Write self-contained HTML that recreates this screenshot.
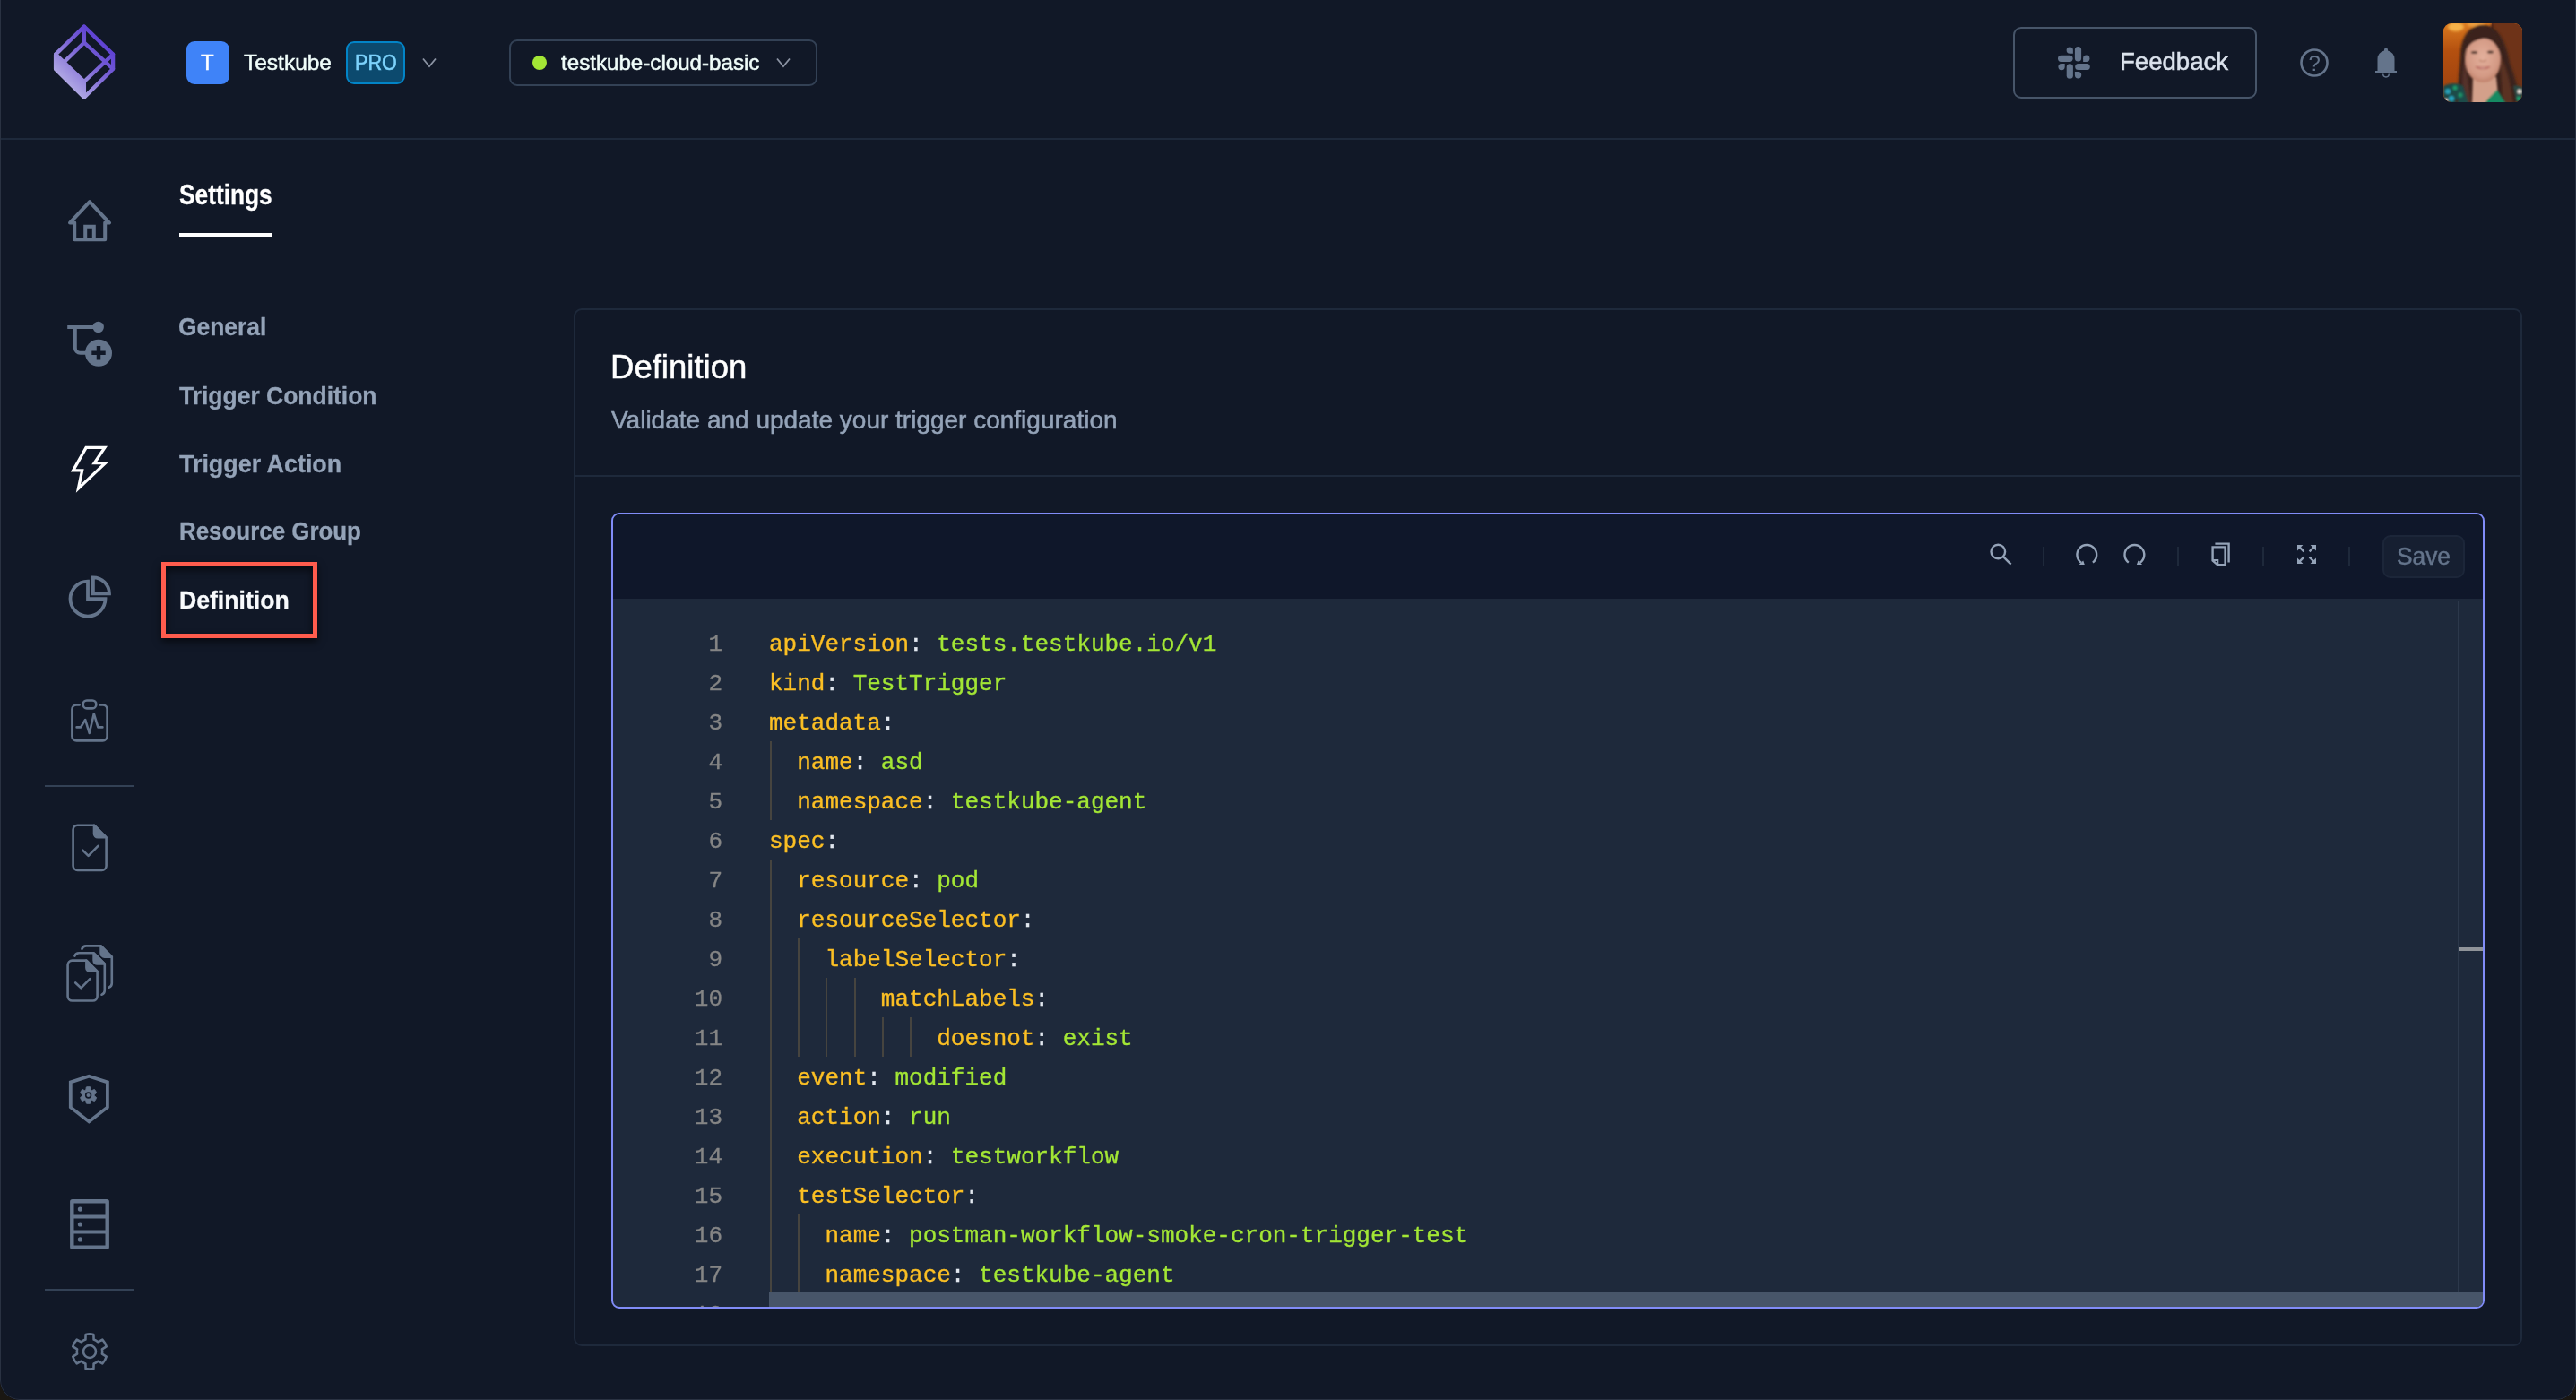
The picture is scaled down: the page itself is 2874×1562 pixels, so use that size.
<!DOCTYPE html>
<html lang="en">
<head>
<meta charset="utf-8">
<title>Testkube - Trigger Definition</title>
<style>
*{box-sizing:border-box;margin:0;padding:0}
html,body{width:2874px;height:1562px;overflow:hidden;background:#1a1712}
body{font-family:"Liberation Sans",sans-serif;color:#fff;position:relative}
#win{will-change:transform;position:absolute;left:0;top:0;width:2874px;height:1562px;background:#111827;border-radius:0 0 22px 22px;overflow:hidden}
#winb{position:absolute;left:0;top:-2px;width:2874px;height:1564px;border-radius:0 0 22px 22px;border:1px solid #2a3242;pointer-events:none}
.abs{position:absolute}
.t{position:absolute;white-space:nowrap;line-height:1;transform-origin:0 50%;-webkit-text-stroke:.5px}
.b{font-weight:bold}
svg{position:absolute;overflow:visible}
/* header */
#hline{left:0;top:154px;width:2874px;height:2px;background:#1e293b}
#orgav{left:208px;top:46px;width:48px;height:48px;border-radius:9px;background:#3f83f8}
#pro{left:386px;top:46px;width:66px;height:48px;border-radius:9px;background:#0c4a6e;border:2px solid #0284c7}
#envsel{left:568px;top:44px;width:344px;height:52px;border-radius:9px;border:2px solid #334155}
#envdot{left:594px;top:62px;width:16px;height:16px;border-radius:50%;background:#a3e635}
#fb{left:2246px;top:30px;width:272px;height:80px;border-radius:9px;border:2px solid #475569}
#avatar{left:2726px;top:26px;width:88px;height:88px;border-radius:9px;overflow:hidden;background:#8a4a1c}
/* sidebar */
.sdiv{left:50px;width:100px;height:2px;background:#334155}
.menu{left:200px;font-size:28px;font-weight:bold;color:#94a3b8;-webkit-text-stroke:.3px}
#redbox{left:180px;top:627px;width:174px;height:85px;border:5px solid #ff5c4d;box-shadow:0 4px 8px rgba(0,0,0,.6), inset 0 4px 8px rgba(0,0,0,.6)}
/* card */
#card{left:640px;top:344px;width:2174px;height:1158px;border:2px solid #1e293b;border-radius:9px}
#cardline{left:642px;top:530px;width:2170px;height:2px;background:#1e293b}
#editor{left:682px;top:572px;width:2090px;height:888px;border:2px solid #818cf8;border-radius:9px;overflow:hidden;background:#1e293b}
#toolbar{left:0;top:0;width:2086px;height:94px;background:#0f172a}
.sep{top:36px;width:2px;height:22px;background:#1e293b}
#save{left:1974px;top:23px;width:92px;height:48px;border-radius:9px;background:#161f31;border:2px solid #1c2639}
#vscroll{left:2058px;top:96px;width:28px;height:790px;border-left:1px solid #2c384b;border-top:1px solid #263144}
#vmark{left:2060px;top:483px;width:26px;height:4px;background:#8f9399}
#hscroll{left:174px;top:868px;width:1912px;height:18px;background:#475569}
.ln{position:absolute;left:0;width:122px;margin-top:2px;-webkit-text-stroke:.3px #858585;text-align:right;font-family:"Liberation Mono",monospace;font-size:26px;line-height:44px;height:44px;color:#858585;white-space:pre}
.cl{position:absolute;left:174px;margin-top:2px;-webkit-text-stroke:.35px;font-family:"Liberation Mono",monospace;font-size:26px;line-height:44px;height:44px;white-space:pre;color:#e2e8f0}
.k{color:#fbbf24}.v{color:#a3e635}
.g{position:absolute;width:2px;background:#46443f}
</style>
</head>
<body>
<div id="win">

<!-- HEADER -->
<div id="hline" class="abs"></div>
<svg id="logo" style="left:0;top:0" width="200" height="140" viewBox="0 0 200 140">
  <defs>
    <linearGradient id="lg" gradientUnits="userSpaceOnUse" x1="126" y1="44" x2="68" y2="104">
      <stop offset="0" stop-color="#5535d2"/><stop offset="0.45" stop-color="#7c66d6"/><stop offset="1" stop-color="#c2bfe8"/>
    </linearGradient>
  </defs>
  <g fill="none" stroke="url(#lg)" stroke-width="4.3" stroke-linejoin="round" stroke-linecap="round">
    <path d="M93.9 29.6 L126.1 60.6 L126.1 76.9 L93.9 108.6 L62.1 76.9 L62.1 60.6 Z"/>
    <path d="M93.9 29.6 L93.9 47.5"/>
    <path d="M93.9 47.5 L71.6 69.1"/>
    <path d="M93.9 47.5 L126.1 76.9"/>
    <path d="M126.1 60.6 L93.9 91"/>
    <path d="M62.1 60.6 L93.9 91 L93.9 108.6 L62.1 76.9 Z" fill="url(#lg)"/>
  </g>
</svg>

<div id="orgav" class="abs"></div>
<div class="t" id="tT" style="left:224px;top:58px;font-size:24px;color:#fff">T</div>
<div class="t" id="tOrg" style="left:271.5px;top:58px;font-size:24px;color:#f0fdfa;transform:scaleX(1.02)">Testkube</div>
<div id="pro" class="abs"></div>
<div class="t" id="tPro" style="left:395.5px;top:58px;font-size:24px;color:#7dd3fc;transform:scaleX(.9)">PRO</div>
<svg style="left:471px;top:64px" width="16" height="12" viewBox="0 0 16 12"><path d="M1 1.5 L8 10 L15 1.5" fill="none" stroke="#8b93a3" stroke-width="1.8"/></svg>

<div id="envsel" class="abs"></div>
<div id="envdot" class="abs"></div>
<div class="t" id="tEnv" style="left:626px;top:58px;font-size:24px;color:#f0fdfa;transform:scaleX(1.006)">testkube-cloud-basic</div>
<svg style="left:866px;top:64px" width="16" height="12" viewBox="0 0 16 12"><path d="M1 1.5 L8 10 L15 1.5" fill="none" stroke="#8b93a3" stroke-width="1.8"/></svg>

<div id="fb" class="abs"></div>
<svg id="slack" style="left:2296px;top:52px" width="36" height="36" viewBox="0 0 36 36" fill="#64748b">
  <g id="sq"><rect x="18.9" y="0" width="7.2" height="16.6" rx="3.6"/><path d="M16.9 7.7 H13.25 a3.65 3.65 0 1 1 3.65 -3.65 Z"/></g>
  <use href="#sq" transform="rotate(90 17.9 17.9)"/><use href="#sq" transform="rotate(180 17.9 17.9)"/><use href="#sq" transform="rotate(270 17.9 17.9)"/>
</svg>
<div class="t" id="tFb" style="left:2364.5px;transform:scaleX(.985);top:55px;font-size:28px;color:#dbe2ec">Feedback</div>
<svg id="help" style="left:2564px;top:52px" width="36" height="36" viewBox="0 0 36 36"><circle cx="18" cy="18" r="14.5" fill="none" stroke="#64748b" stroke-width="2.6"/></svg>
<div class="t" id="tQ" style="left:2575.5px;top:58.5px;font-size:24px;color:#64748b;-webkit-text-stroke:0">?</div>
<svg id="bell" style="left:2648px;top:52px" width="28" height="36" viewBox="0 0 28 36" fill="#64748b">
  <path d="M14 1.5 a2 2 0 0 1 2 2 v1 a9.5 9.5 0 0 1 7.5 9.3 V27 h2.5 v2.6 H2 V27 h2.5 V13.8 A9.5 9.5 0 0 1 12 4.5 v-1 a2 2 0 0 1 2-2z"/>
  <path d="M10.7 30.6 a3.3 3.3 0 0 0 6.6 0" fill="none" stroke="#64748b" stroke-width="1.5"/>
</svg>
<div id="avatar" class="abs"><svg style="left:0;top:0" width="88" height="88" viewBox="0 0 88 88">
  <defs>
    <filter id="bl1" x="-20%" y="-20%" width="140%" height="140%"><feGaussianBlur stdDeviation="1.6"/></filter>
    <filter id="bl2" x="-20%" y="-20%" width="140%" height="140%"><feGaussianBlur stdDeviation="0.8"/></filter>
    <linearGradient id="bgl" x1="0" y1="0" x2="0" y2="1"><stop offset="0" stop-color="#d9791f"/><stop offset="0.35" stop-color="#b4500f"/><stop offset="1" stop-color="#9a3f10"/></linearGradient>
    <radialGradient id="face" cx="0.5" cy="0.45" r="0.6"><stop offset="0" stop-color="#e3b09c"/><stop offset="0.7" stop-color="#d49a85"/><stop offset="1" stop-color="#b87962"/></radialGradient>
  </defs>
  <rect width="88" height="88" fill="url(#bgl)"/>
  <rect x="54" y="0" width="34" height="88" fill="#6e3318"/>
  <g filter="url(#bl1)">
    <ellipse cx="14" cy="4" rx="9" ry="5" fill="#f6b24a"/>
    <ellipse cx="36" cy="1" rx="10" ry="3" fill="#eea040"/>
    <rect x="53" y="0" width="3" height="88" fill="#4e2412"/>
    <path d="M44 2 C28 2 20 16 19 34 C18 52 16 70 15 92 L86 92 C84 74 80 60 74 44 C70 22 62 2 44 2 Z" fill="#3b231b"/>
    <path d="M60 30 C70 44 76 70 78 92 L66 92 C66 70 64 50 60 30Z" fill="#5a3022"/>
    <path d="M24 40 C21 56 20 72 22 92 L32 92 C28 74 27 56 24 40Z" fill="#55302a"/>
  </g>
  <g filter="url(#bl2)">
    <path d="M33 60 L59 60 L62 90 L32 90 Z" fill="#d3a08a"/>
    <path d="M44 15 C31 15 24 27 24 41 C24 55 33 66 44 66 C56 66 64 55 64 40 C64 28 58 15 44 15 Z" fill="url(#face)"/>
    <path d="M44 3 C30 4 23 18 22 38 C25 26 32 19 44 17 C54 16 61 24 65 38 C64 18 58 3 44 3Z" fill="#3b231b"/>
    <ellipse cx="34.5" cy="32.5" rx="3.6" ry="1.5" fill="#4a3028"/>
    <ellipse cx="52.5" cy="32" rx="3.6" ry="1.5" fill="#4a3028"/>
    <path d="M36 48.5 Q44 53.5 52 48.5 Q44 50 36 48.5Z" fill="#f1e4de" stroke="#b8655c" stroke-width="1.2"/>
    <path d="M40 41 Q44 44 48 41" fill="none" stroke="#b98068" stroke-width="1.2"/>
    <path d="M0 70 C8 66 16 66 22 70 L28 90 L0 90Z" fill="#1d4b4a"/>
    <path d="M60 74 L50 84 L46 90 L70 90 Z" fill="#178a62"/>
    <path d="M78 70 C82 69 86 70 90 72 L90 90 L82 90 Z" fill="#2a4a44"/>
    <circle cx="5" cy="76" r="3" fill="#2aa0b8"/><circle cx="13" cy="72" r="2.5" fill="#1f9a6a"/><circle cx="9" cy="84" r="3" fill="#23a4c0"/><circle cx="19" cy="80" r="2.5" fill="#1e8f66"/><circle cx="3" cy="86" r="2" fill="#e8e0d8"/><circle cx="15" cy="87" r="2" fill="#3a2a22"/>
    <circle cx="85" cy="76" r="2.5" fill="#e8e0d8"/><circle cx="84" cy="84" r="2.5" fill="#1f9a6a"/>
  </g>
</svg></div>

<!-- SIDEBAR ICONS -->
<svg id="sideicons" style="left:0;top:0" width="200" height="1562" viewBox="0 0 200 1562" fill="none" stroke="#64748b" stroke-linecap="round" stroke-linejoin="round">
  <!-- home -->
  <g stroke-width="4">
    <path d="M83.2 267.2 V248.6 H78 L100 225.2 L122 248.6 H117.2 V267.2 Z" stroke-linejoin="round"/>
    <path d="M95.2 267 V252.8 H104.8 V267" stroke-linecap="butt" stroke-linejoin="miter"/>
  </g>
  <!-- add trigger -->
  <g stroke-width="4" stroke-linecap="butt">
    <path d="M75.2 365 H109"/>
    <path d="M83.8 365 V388 a5.8 5.8 0 0 0 5.8 5.8 H98"/>
  </g>
  <circle cx="109.7" cy="365" r="6.2" fill="#64748b" stroke="none"/>
  <circle cx="110" cy="393.8" r="15" fill="#64748b" stroke="none"/>
  <path d="M102.3 393.8 H117.7 M110 386.1 V401.5" stroke="#111827" stroke-width="4.5" stroke-linecap="butt"/>
  <!-- lightning (active) -->
  <clipPath id="lc"><path d="M95.1 497.8 L120 497.8 L108.4 514.9 L121.7 514.9 L84.8 549.8 L89.6 526.6 L78.8 526.6 Z"/></clipPath>
  <path d="M95.1 497.8 L120 497.8 L108.4 514.9 L121.7 514.9 L84.8 549.8 L89.6 526.6 L78.8 526.6 Z" stroke="#fff" stroke-width="6.6" stroke-linejoin="miter" stroke-miterlimit="10" clip-path="url(#lc)"/>
  <!-- pie -->
  <g stroke-width="3.8" stroke-linecap="butt" stroke-linejoin="miter">
    <path d="M98 648.6 A19.5 19.5 0 1 0 117.5 668.1 H98 Z"/>
    <path d="M103.9 662.4 V644.3 A18.1 18.1 0 0 1 122 662.4 Z"/>
  </g>
  <!-- clipboard pulse -->
  <g stroke-width="2.6">
    <path d="M88.6 786.5 H85.4 a5 5 0 0 0 -5 5 V821.4 a5 5 0 0 0 5 5 H114.6 a5 5 0 0 0 5 -5 V791.5 a5 5 0 0 0 -5 -5 H111.4"/>
    <rect x="92.7" y="781.5" width="14.6" height="8.9" rx="4.2"/>
    <path d="M85.6 811.4 H90.1 L95.2 803 L99.7 818 L104.8 796.4 L109.4 811.4 H114.4"/>
  </g>
  <!-- file check -->
  <g stroke-width="2.6">
    <path d="M105 920.7 H86.6 a5 5 0 0 0 -5 5 V965.9 a5 5 0 0 0 5 5 H113.6 a5 5 0 0 0 5 -5 V934.3 Z"/>
    <path d="M105 920.7 L118.6 934.3 H109 a4 4 0 0 1 -4 -4 Z" fill="#64748b"/>
    <path d="M92.3 948.6 L98.6 954.9 L109.4 943.8"/>
  </g>
  <!-- files stack -->
  <g stroke-width="2.6">
    <path d="M96.4 1071.6 H80.6 a5 5 0 0 0 -5 5 V1111.5 a5 5 0 0 0 5 5 H103.6 a5 5 0 0 0 5 -5 V1083.8 Z"/>
    <path d="M96.4 1071.6 L108.6 1083.8 H100.4 a4 4 0 0 1 -4 -4 Z" fill="#64748b"/>
    <path d="M84.2 1096.5 L90.4 1102.3 L100.3 1092.1"/>
    <path d="M83.4 1066.6 a5 5 0 0 1 4.6 -3.3 H104.6 L116.8 1075.5 V1105 a5 5 0 0 1 -3.3 4.7"/>
    <path d="M104.6 1063.3 L116.8 1075.5 H108.6 a4 4 0 0 1 -4 -4 Z" fill="#64748b"/>
    <path d="M91.4 1058.7 a5 5 0 0 1 4.6 -3.3 H112.6 L124.8 1067.6 V1097 a5 5 0 0 1 -3.3 4.7"/>
    <path d="M112.6 1055.4 L124.8 1067.6 H116.6 a4 4 0 0 1 -4 -4 Z" fill="#64748b"/>
  </g>
  <!-- shield -->
  <path d="M99.3 1200.8 L119.9 1207.4 V1235.4 L99.3 1251.4 L78.8 1235.4 V1207.4 Z" stroke-width="3.8" stroke-linejoin="miter"/>
  <path d="M101.3 1216.0 L100.9 1212.9 A9.4 9.4 0 0 0 96.3 1212.9 L95.9 1216.0 A6.6 6.6 0 0 0 94.7 1216.7 L91.8 1215.5 A9.4 9.4 0 0 0 89.6 1219.4 L92.0 1221.3 A6.6 6.6 0 0 0 92.0 1222.7 L89.6 1224.6 A9.4 9.4 0 0 0 91.8 1228.5 L94.7 1227.3 A6.6 6.6 0 0 0 95.9 1228.0 L96.3 1231.1 A9.4 9.4 0 0 0 100.9 1231.1 L101.3 1228.0 A6.6 6.6 0 0 0 102.5 1227.3 L105.4 1228.5 A9.4 9.4 0 0 0 107.6 1224.6 L105.2 1222.7 A6.6 6.6 0 0 0 105.2 1221.3 L107.6 1219.4 A9.4 9.4 0 0 0 105.4 1215.5 L102.5 1216.7 A6.6 6.6 0 0 0 101.3 1216.0Z" fill="#64748b" stroke-width="1"/>
  <circle cx="98.6" cy="1222" r="2.9" stroke="#111827" stroke-width="1.6"/>
  <!-- server -->
  <g stroke-width="4.4" stroke-linecap="butt">
    <rect x="80.3" y="1340.2" width="39.4" height="51.6" rx="0.6"/>
    <path d="M80.3 1357.5 H119.7 M80.3 1374.6 H119.7" stroke-width="4"/>
  </g>
  <g fill="#64748b" stroke="none"><circle cx="89.4" cy="1349.1" r="2.6"/><circle cx="89.4" cy="1366" r="2.6"/><circle cx="89.4" cy="1382.9" r="2.6"/></g>
  <!-- gear -->
  <g stroke-width="2.6">
    <path d="M104.6 1494.6 L104.4 1488.9 A19.6 19.6 0 0 0 95.6 1488.9 L95.4 1494.6 A14.2 14.2 0 0 0 90.7 1497.3 L85.7 1494.6 A19.6 19.6 0 0 0 81.3 1502.3 L86.1 1505.3 A14.2 14.2 0 0 0 86.1 1510.7 L81.3 1513.7 A19.6 19.6 0 0 0 85.7 1521.4 L90.7 1518.7 A14.2 14.2 0 0 0 95.4 1521.4 L95.6 1527.1 A19.6 19.6 0 0 0 104.4 1527.1 L104.6 1521.4 A14.2 14.2 0 0 0 109.3 1518.7 L114.3 1521.4 A19.6 19.6 0 0 0 118.7 1513.7 L113.9 1510.7 A14.2 14.2 0 0 0 113.9 1505.3 L118.7 1502.3 A19.6 19.6 0 0 0 114.3 1494.6 L109.3 1497.3 A14.2 14.2 0 0 0 104.6 1494.6Z"/>
    <circle cx="100" cy="1508" r="7"/>
  </g>
</svg>
<div class="abs sdiv" style="top:876px"></div>
<div class="abs sdiv" style="top:1438px"></div>

<!-- SETTINGS MENU -->
<div class="t b" id="tSettings" style="left:199.5px;top:202px;font-size:30.5px;color:#fff;transform:scaleX(.862);-webkit-text-stroke:.3px">Settings</div>
<div class="abs" style="left:200px;top:260px;width:104px;height:4px;background:#fff"></div>
<div class="t menu" id="m1" style="top:351px;left:199px;transform:scaleX(.942)">General</div>
<div class="t menu" id="m2" style="top:428px;transform:scaleX(.945)">Trigger Condition</div>
<div class="t menu" id="m3" style="top:504px;transform:scaleX(.96)">Trigger Action</div>
<div class="t menu" id="m4" style="top:579px;left:199.5px;transform:scaleX(.925)">Resource Group</div>
<div class="t menu" id="m5" style="top:656px;left:199.5px;color:#f8fafc;transform:scaleX(.95)">Definition</div>
<div id="redbox" class="abs"></div>

<!-- CARD -->
<div id="card" class="abs"></div>
<div id="cardline" class="abs"></div>
<div class="t" id="tTitle" style="left:680.5px;top:391.5px;font-size:36px;color:#fff;transform:scaleX(1.015)">Definition</div>
<div class="t" id="tSub" style="left:682px;top:455px;font-size:28px;color:#94a3b8">Validate and update your trigger configuration</div>

<div id="editor" class="abs">
  <div id="toolbar" class="abs"></div>
  <div class="abs sep" style="left:1595px"></div>
  <div class="abs sep" style="left:1745px"></div>
  <div class="abs sep" style="left:1840px"></div>
  <div class="abs sep" style="left:1936px"></div>
  <div id="save" class="abs"></div>
  <div class="t" id="tSave" style="left:1990px;top:33px;font-size:28px;color:#64748b;transform:scaleX(.94)">Save</div>
  <div id="code" class="abs" style="left:0;top:94px;width:2086px;height:790px">
<div class="ln" style="top:27px">1</div>
<div class="cl" style="top:27px"><span class="k">apiVersion</span>: <span class="v">tests.testkube.io/v1</span></div>
<div class="ln" style="top:71px">2</div>
<div class="cl" style="top:71px"><span class="k">kind</span>: <span class="v">TestTrigger</span></div>
<div class="ln" style="top:115px">3</div>
<div class="cl" style="top:115px"><span class="k">metadata</span>:</div>
<div class="ln" style="top:159px">4</div>
<div class="cl" style="top:159px">  <span class="k">name</span>: <span class="v">asd</span></div>
<div class="g" style="left:175.0px;top:159px;height:44px"></div>
<div class="ln" style="top:203px">5</div>
<div class="cl" style="top:203px">  <span class="k">namespace</span>: <span class="v">testkube-agent</span></div>
<div class="g" style="left:175.0px;top:203px;height:44px"></div>
<div class="ln" style="top:247px">6</div>
<div class="cl" style="top:247px"><span class="k">spec</span>:</div>
<div class="ln" style="top:291px">7</div>
<div class="cl" style="top:291px">  <span class="k">resource</span>: <span class="v">pod</span></div>
<div class="g" style="left:175.0px;top:291px;height:44px"></div>
<div class="ln" style="top:335px">8</div>
<div class="cl" style="top:335px">  <span class="k">resourceSelector</span>:</div>
<div class="g" style="left:175.0px;top:335px;height:44px"></div>
<div class="ln" style="top:379px">9</div>
<div class="cl" style="top:379px">    <span class="k">labelSelector</span>:</div>
<div class="g" style="left:175.0px;top:379px;height:44px"></div>
<div class="g" style="left:206.2px;top:379px;height:44px"></div>
<div class="ln" style="top:423px">10</div>
<div class="cl" style="top:423px">        <span class="k">matchLabels</span>:</div>
<div class="g" style="left:175.0px;top:423px;height:44px"></div>
<div class="g" style="left:206.2px;top:423px;height:44px"></div>
<div class="g" style="left:237.4px;top:423px;height:44px"></div>
<div class="g" style="left:268.6px;top:423px;height:44px"></div>
<div class="ln" style="top:467px">11</div>
<div class="cl" style="top:467px">            <span class="k">doesnot</span>: <span class="v">exist</span></div>
<div class="g" style="left:175.0px;top:467px;height:44px"></div>
<div class="g" style="left:206.2px;top:467px;height:44px"></div>
<div class="g" style="left:237.4px;top:467px;height:44px"></div>
<div class="g" style="left:268.6px;top:467px;height:44px"></div>
<div class="g" style="left:299.8px;top:467px;height:44px"></div>
<div class="g" style="left:331.0px;top:467px;height:44px"></div>
<div class="ln" style="top:511px">12</div>
<div class="cl" style="top:511px">  <span class="k">event</span>: <span class="v">modified</span></div>
<div class="g" style="left:175.0px;top:511px;height:44px"></div>
<div class="ln" style="top:555px">13</div>
<div class="cl" style="top:555px">  <span class="k">action</span>: <span class="v">run</span></div>
<div class="g" style="left:175.0px;top:555px;height:44px"></div>
<div class="ln" style="top:599px">14</div>
<div class="cl" style="top:599px">  <span class="k">execution</span>: <span class="v">testworkflow</span></div>
<div class="g" style="left:175.0px;top:599px;height:44px"></div>
<div class="ln" style="top:643px">15</div>
<div class="cl" style="top:643px">  <span class="k">testSelector</span>:</div>
<div class="g" style="left:175.0px;top:643px;height:44px"></div>
<div class="ln" style="top:687px">16</div>
<div class="cl" style="top:687px">    <span class="k">name</span>: <span class="v">postman-workflow-smoke-cron-trigger-test</span></div>
<div class="g" style="left:175.0px;top:687px;height:44px"></div>
<div class="g" style="left:206.2px;top:687px;height:44px"></div>
<div class="ln" style="top:731px">17</div>
<div class="cl" style="top:731px">    <span class="k">namespace</span>: <span class="v">testkube-agent</span></div>
<div class="g" style="left:175.0px;top:731px;height:44px"></div>
<div class="g" style="left:206.2px;top:731px;height:44px"></div>
<div class="ln" style="top:775px">18</div>
<div class="g" style="left:175.0px;top:775px;height:44px"></div>
  </div>
  <div id="vscroll" class="abs"></div>
  <div id="vmark" class="abs"></div>
  <div id="hscroll" class="abs"></div>
</div>

<svg id="tbicons" style="left:2200px;top:590px" width="420" height="60" viewBox="2200 590 420 60" fill="none" stroke="#94a3b8" stroke-width="2.4">
  <circle cx="2229.3" cy="615.5" r="7.8"/>
  <path d="M2235 621.2 L2243.6 629.6"/>
  <path d="M2322 627.8 A10.9 10.9 0 1 1 2334.9 627.6"/>
  <path d="M2319.6 630 H2325.8 L2324.2 625.4 Z" fill="#94a3b8" stroke="none"/>
  <path d="M2387.7 627.8 A10.9 10.9 0 1 0 2374.8 627.6"/>
  <path d="M2390.1 630 H2383.9 L2385.5 625.4 Z" fill="#94a3b8" stroke="none"/>
  <path d="M2468.6 610.4 H2482.6 V630.3 H2474.2 L2468.6 625.4 Z" stroke-linejoin="miter"/>
  <path d="M2468.6 625 H2474.4 V630.3" stroke-width="1.8"/>
  <path d="M2471.4 606.6 H2486.6 V627.6" stroke-linejoin="miter"/>
  <g stroke-width="2.4">
    <path d="M2564.4 609.4 L2570.4 615.4 M2582.6 609.4 L2576.6 615.4 M2564.4 627.6 L2570.4 621.6 M2582.6 627.6 L2576.6 621.6"/>
  </g>
  <g fill="#94a3b8" stroke="none">
    <path d="M2563 608 H2569.4 L2563 614.4 Z"/><path d="M2584 608 H2577.6 L2584 614.4 Z"/><path d="M2563 629 H2569.4 L2563 622.6 Z"/><path d="M2584 629 H2577.6 L2584 622.6 Z"/>
  </g>
</svg>
<div id="winb"></div>
</div>
</body>
</html>
